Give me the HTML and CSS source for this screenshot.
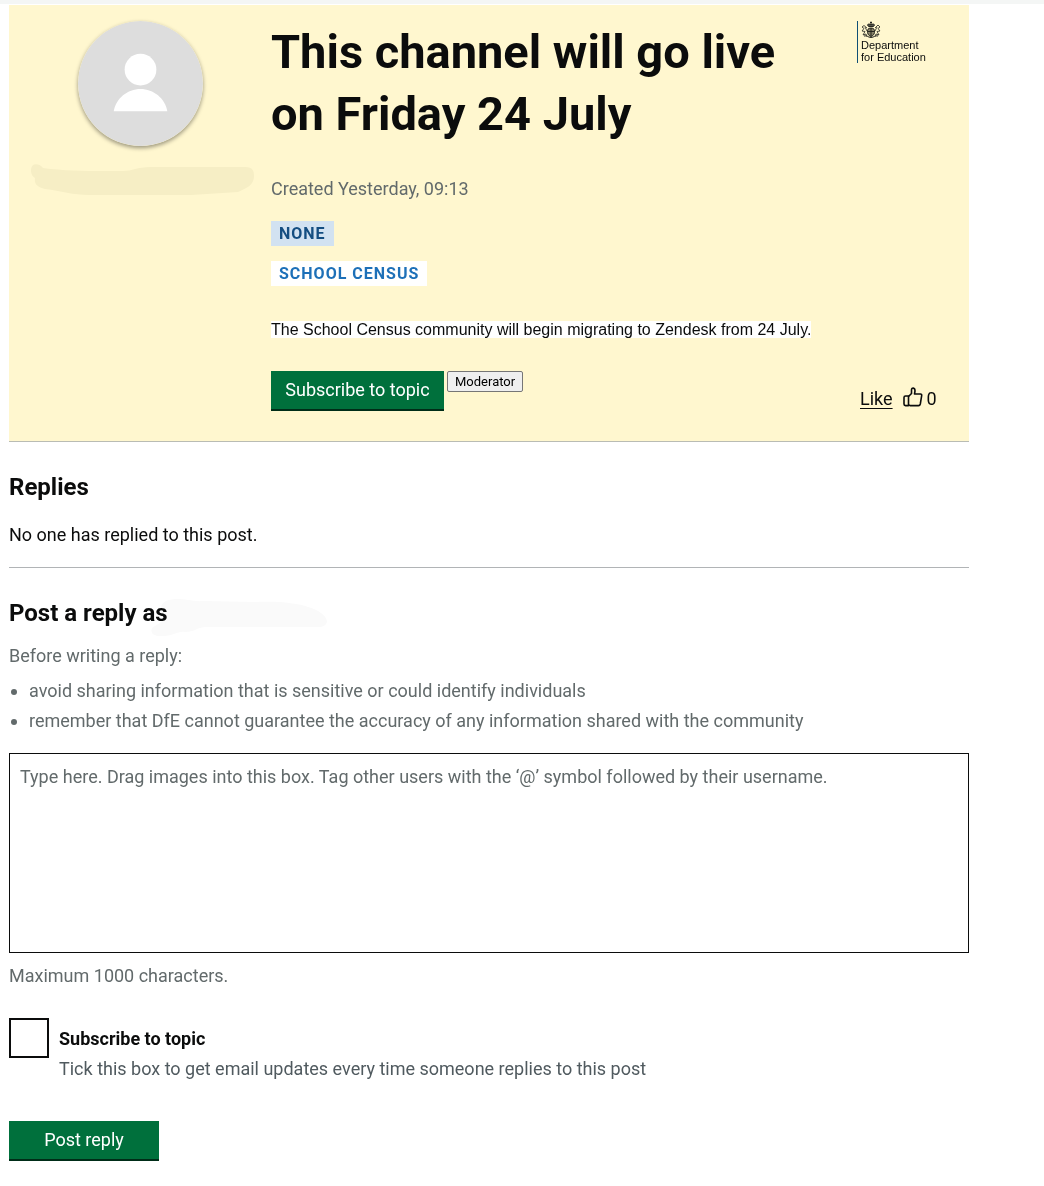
FILE: index.html
```
<!DOCTYPE html>
<html lang="en">
<head>
  <meta charset="UTF-8">
  <meta name="viewport" content="width=device-width, initial-scale=1">
  <title>This channel will go live on Friday 24 July</title>
  <link rel="stylesheet" href="styles.css">
</head>
<body>
  <main class="page">
    <article class="post">
      <div class="post-author">
        <svg class="avatar" viewBox="0 0 126 126" role="img" aria-label="User avatar">
          <circle cx="63" cy="63" r="63" fill="#ddd"/>
          <circle cx="63" cy="49" r="16" fill="#fff"/>
          <path d="M36 91C38 78 50 68.500 63 68.500S88 78 90 91Z" fill="#fff"/>
        </svg>
        <svg class="author-name" viewBox="0 0 224 34" aria-hidden="true">
          <path d="M2 1C5-1 10 1 12 4C40 8 80 7 92 7C102 7 105 3 120 3H214C222 3 223 7 223 12C223 21 216 24 207 28L160 31H58C42 31 30 27 14 25C6 23 3 20 4 14C-1 11-1 4 2 1Z" fill="#f6eec5"/>
        </svg>
      </div>
      <div class="post-body">
        <h1>This channel will go live on Friday 24 July</h1>
        <p class="created">Created Yesterday, 09:13</p>
        <div class="tags">
          <strong class="tag tag-blue">None</strong>
          <strong class="tag tag-white">School Census</strong>
        </div>
        <p class="message"><span>The School Census community will begin migrating to Zendesk from 24 July.</span></p>
        <div class="actions">
          <button type="button" class="btn btn-topic">Subscribe to topic</button>
          <button type="button" class="btn-mod">Moderator</button>
        </div>
      </div>
      <div class="post-side">
        <div class="logo">
          <svg class="crest" viewBox="0 0 20 18" fill="none" stroke="#25251f" aria-hidden="true">
            <path d="M7.500 5.500C5.500 3.500 7 2.500 10 3.500C13 2.500 14.500 3.500 12.500 5.500Z" fill="#55544a"/>
            <path d="M10 .5V3M9 1.500H11"/>
            <path d="M10 7C13 7 14 9 13.500 11.500C13 14 11.500 15 10 15.500C8.500 15 7 14 6.500 11.500C6 9 7 7 10 7ZM7 10.500H13M10 7V15" fill="#88836b"/>
            <path d="M6 7L3 4.500L1 6L3 7.500L1 10L4 10.500L2 14L5 13L6 15.500M4 6L6 10M14 7L17 4L19 6L17 7.500L19 10L16 10.500L18 14L15 13L14 15.500M16 6L14 10" stroke-width=".8"/>
            <path d="M3 15C6 14 7 16.500 10 16.500C13 16.500 14 14 17 15"/>
          </svg>
          <span>Department<br>for Education</span>
        </div>
        <div class="like">
          <a href="#">Like</a>
          <svg class="thumb" viewBox="0 0 20 20" fill="none" stroke="#0b0c0c" stroke-width="1.600" stroke-linejoin="round" aria-hidden="true">
            <path d="M5.500 9.500L8.500 6.500V3C8.500 1.500 9.500 1 10.300 1.100C11.500 1.300 12 2.500 12 4L11.500 7H17.500C18.500 7 18.800 7.800 18.700 8.500L17.300 17C17 18.200 16.500 18.600 15.500 18.600H7L5.500 18"/>
            <path d="M5.500 9H2.500Q1 9 1 10.500V17Q1 18.600 2.500 18.600H5.500Z"/>
          </svg>
          <span>0</span>
        </div>
      </div>
    </article>

    <section class="replies">
      <h2>Replies</h2>
      <p>No one has replied to this post.</p>
    </section>

    <form class="reply">
      <h2>Post a reply as
        <svg class="reply-name" viewBox="0 0 176 38" aria-hidden="true">
          <path d="M18 2C30-1 40 4 52 3L104 4C128 3 146 5 157 9C168 12 176 18 176 24C174 30 168 29 158 29H54C44 30 44 34 34 34C26 33 24 38 12 38C2 39-2 34 2 29C8 26 12 24 12 18C8 10 10 4 18 2Z" fill="#fafafa"/>
        </svg>
      </h2>
      <div class="hint">
        <p>Before writing a reply:</p>
        <ul>
          <li>avoid sharing information that is sensitive or could identify individuals</li>
          <li>remember that DfE cannot guarantee the accuracy of any information shared with the community</li>
        </ul>
      </div>
      <textarea class="reply-text" aria-label="Your reply" placeholder="Type here. Drag images into this box. Tag other users with the ‘@’ symbol followed by their username."></textarea>
      <p class="hint">Maximum 1000 characters.</p>
      <div class="subscribe">
        <input type="checkbox" id="subscribe" aria-describedby="subscribe-hint">
        <div>
          <label for="subscribe">Subscribe to topic</label>
          <p class="hint" id="subscribe-hint">Tick this box to get email updates every time someone replies to this post</p>
        </div>
      </div>
      <button type="submit" class="btn btn-post">Post reply</button>
    </form>
  </main>
</body>
</html>
```
FILE: styles.css
```
* {
  box-sizing: border-box;
}
body {
  margin: 0;
  border-top: 4px solid #f4f6f5;
  background: #fff;
  color: #0b0c0c;
  font: 18px/30px Roboto, "Liberation Sans", sans-serif;
}
h1, h2, p, ul {
  margin: 0;
}
.page {
  max-width: 960px;
  margin: 1px 75px 24px 9px;
}

/* post */
.post {
  display: grid;
  grid-template-columns: 262px 1fr 112px;
  padding: 16px 0 30px;
  background: #fff7cf;
  border-bottom: 1px solid #b9bcb4;
}
.post-author {
  display: flex;
  flex-direction: column;
  align-items: center;
  gap: 18px;
}
.avatar {
  width: 125px;
  height: 125px;
  border-radius: 50%;
  box-shadow: 0 2px 4px rgba(0, 0, 0, .4);
}
.author-name {
  width: 224px;
  height: 34px;
  margin-left: 6px;
}
.post-body {
  padding-right: 40px;
}
h1 {
  font-size: 47px;
  line-height: 62px;
  font-weight: bold;
}
.created {
  margin-top: 29px;
  color: #626a6b;
}
.tags {
  display: flex;
  flex-direction: column;
  align-items: flex-start;
  gap: 15px;
  margin-top: 17px;
}
.tag {
  padding: 0 8px;
  font-size: 16px;
  line-height: 25px;
  letter-spacing: 1px;
  text-transform: uppercase;
}
.tag-blue {
  background: #d2e2f1;
  color: #144e81;
}
.tag-white {
  background: #fff;
  color: #1d70b8;
}
.message {
  margin-top: 29px;
  font: 16px/30px "Liberation Sans", Arial, sans-serif;
}
.message span {
  background: #fff;
}
.actions {
  display: flex;
  align-items: flex-start;
  gap: 3px;
  margin-top: 26px;
}
.btn {
  height: 40px;
  padding: 0 12px;
  border: 0;
  border-bottom: 2px solid #002d18;
  background: #00703c;
  color: #fff;
  font: inherit;
  white-space: nowrap;
}
.btn-topic {
  min-width: 173px;
}
.btn-mod {
  height: 21px;
  padding: 0 7px;
  border: 1px solid #767676;
  border-radius: 2px;
  background: #efefef;
  color: #000;
  font: 13px/19px Roboto, sans-serif;
}
.post-side {
  display: flex;
  flex-direction: column;
  justify-content: space-between;
}
.logo {
  width: 72px;
  padding-left: 3px;
  border-left: 1px solid #104f75;
  font: 11px/12px "Liberation Sans", Arial, sans-serif;
  white-space: nowrap;
}
.crest {
  display: block;
  width: 20px;
  height: 18px;
}
.like {
  display: flex;
  align-items: center;
  margin-left: 3px;
  line-height: 24px;
}
.like a {
  color: #0b0c0c;
  text-underline-offset: 3px;
}
.thumb {
  width: 20px;
  height: 20px;
  margin: 0 4px 4px 10px;
}

/* replies */
h2 {
  font-size: 24px;
  line-height: 30px;
}
.replies {
  padding: 30px 0 17px;
  border-bottom: 1px solid #b1b4b6;
}
.replies p {
  margin-top: 18px;
}

/* reply form */
.reply {
  padding-top: 30px;
}
.reply h2 {
  display: flex;
}
.reply-name {
  width: 176px;
  height: 38px;
  margin: 0 0 -8px -17px;
  mix-blend-mode: multiply;
}
.hint {
  color: #505a5f;
}
.reply > .hint {
  margin-top: 8px;
  color: #626a6b;
}
.hint ul {
  margin-top: 5px;
  padding-left: 20px;
}
.reply > div.hint {
  margin-top: 13px;
}
.reply-text {
  display: block;
  width: 100%;
  height: 200px;
  margin-top: 17px;
  padding: 8px 10px;
  border: 1px solid #0b0c0c;
  border-radius: 0;
  resize: none;
  font: inherit;
}
.reply-text::placeholder {
  color: #626a6b;
}
.subscribe {
  display: flex;
  gap: 10px;
  margin-top: 27px;
}
.subscribe > div {
  padding-top: 6px;
}
.subscribe input {
  appearance: none;
  flex: none;
  width: 40px;
  height: 40px;
  margin: 0;
  border: 2px solid #0b0c0c;
  background: #fff;
}
.subscribe input:checked {
  background: #0b0c0c;
  box-shadow: inset 0 0 0 8px #fff;
}
.subscribe label {
  display: block;
  font-weight: bold;
}
.btn-post {
  min-width: 150px;
  margin-top: 37px;
}
```
